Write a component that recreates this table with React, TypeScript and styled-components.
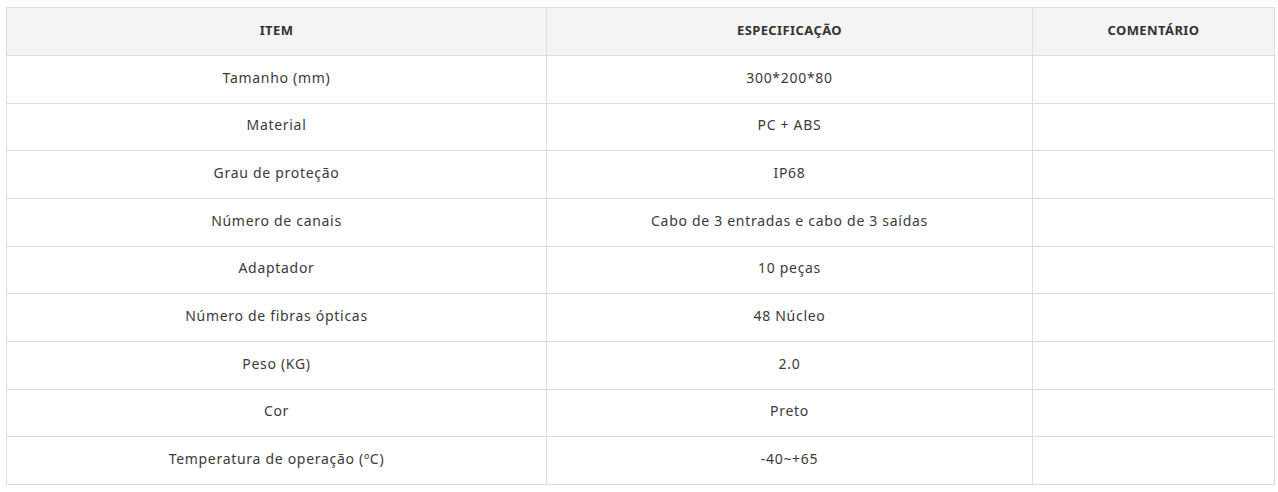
import React from "react";
import styled, { createGlobalStyle } from "styled-components";

import type { FC } from "react";

const GlobalStyle = createGlobalStyle`
  body {
    margin: 0;
    background: #ffffff;
    font-family: "Noto Sans", "Open Sans", sans-serif;
  }
`;

const Page = styled.div`
  padding: 7px 5px 0 6px;
`;

const SpecTable = styled.table`
  width: 1268px;
  border-collapse: collapse;
  table-layout: fixed;
`;

const HeadRow = styled.tr`
  height: 48px;
`;

const Row = styled.tr`
  height: 47.67px;
`;

const HeadCell = styled.th<{ $width: number }>`
  width: ${(p) => p.$width}px;
  box-sizing: border-box;
  background: #f4f4f4;
  border: 1px solid #dedede;
  color: #333333;
  font-size: 13px;
  font-weight: 700;
  letter-spacing: 0.4px;
  text-transform: uppercase;
  text-align: center;
  padding: 0 0 3px;
`;

const Cell = styled.td`
  box-sizing: border-box;
  border: 1px solid #dedede;
  color: #3a3a3a;
  font-size: 14px;
  letter-spacing: 0.7px;
  text-align: center;
  padding: 0 0 4px;
`;

const rows: [string, string][] = [
  ["Tamanho (mm)", "300*200*80"],
  ["Material", "PC + ABS"],
  ["Grau de proteção", "IP68"],
  ["Número de canais", "Cabo de 3 entradas e cabo de 3 saídas"],
  ["Adaptador", "10 peças"],
  ["Número de fibras ópticas", "48 Núcleo"],
  ["Peso (KG)", "2.0"],
  ["Cor", "Preto"],
  ["Temperatura de operação (ºC)", "-40~+65"],
];

const App: FC = () => {
  return (
    <Page>
      <GlobalStyle />
      <SpecTable>
        <thead>
          <HeadRow>
            <HeadCell $width={540}>Item</HeadCell>
            <HeadCell $width={486}>Especificação</HeadCell>
            <HeadCell $width={242}>Comentário</HeadCell>
          </HeadRow>
        </thead>
        <tbody>
          {rows.map(([item, spec]) => (
            <Row key={item}>
              <Cell>{item}</Cell>
              <Cell>{spec}</Cell>
              <Cell />
            </Row>
          ))}
        </tbody>
      </SpecTable>
    </Page>
  );
};

export default App;
